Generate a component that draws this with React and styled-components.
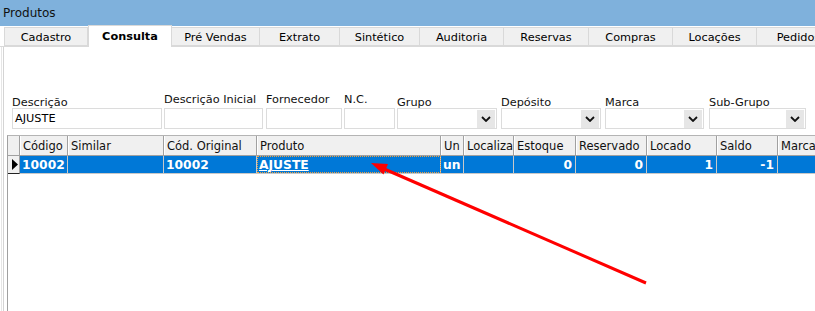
import React from 'react';
import styled, { createGlobalStyle } from 'styled-components';

const GlobalStyle = createGlobalStyle`
  html, body {
    margin: 0;
    padding: 0;
    background: #fff;
  }
  body {
    font-family: "DejaVu Sans", Verdana, sans-serif;
    font-size: 11px;
    color: #000;
  }
`;

const Window = styled.div`
  position: relative;
  width: 815px;
  height: 311px;
  overflow: hidden;
  display: flex;
  flex-direction: column;
  background: #fff;
`;

const TitleBar = styled.div`
  height: 26px;
  flex: none;
  background: #7fb1dc;
  font-size: 12px;
  line-height: 26px;
  padding-left: 3px;
  color: #111;
`;

const TabStrip = styled.div`
  height: 21px;
  flex: none;
  display: flex;
  align-items: flex-end;
  padding-left: 4px;
  border-bottom: 1px solid #d9d9d9;
  box-sizing: border-box;
`;

const Tab = styled.div`
  flex: none;
  width: ${(p) => p.$w}px;
  box-sizing: border-box;
  height: ${(p) => (p.$active ? 22 : 19)}px;
  margin-bottom: ${(p) => (p.$active ? -1 : 0)}px;
  background: ${(p) => (p.$active ? '#fff' : '#f0f0f0')};
  border: 1px solid #d9d9d9;
  border-bottom: ${(p) => (p.$active ? 'none' : '1px solid #d9d9d9')};
  border-left: ${(p) => (p.$first || p.$active ? '1px solid #d9d9d9' : 'none')};
  font-weight: ${(p) => (p.$active ? 'bold' : 'normal')};
  font-size: 11.3px;
  text-align: center;
  padding-top: ${(p) => (p.$active ? 1 : 2)}px;
  line-height: ${(p) => (p.$active ? 19 : 16)}px;
  white-space: nowrap;
  overflow: hidden;
  position: relative;
  z-index: ${(p) => (p.$active ? 1 : 0)};
`;

const Frame = styled.div`
  flex: 1;
  display: flex;
  border-left: 1px solid #e6e6e6;
  margin-left: 1px;
  min-height: 0;
`;

const Panel = styled.div`
  flex: 1;
  margin-left: 1px;
  border-left: 1px solid #d4d4d4;
  padding-left: 3px;
  display: flex;
  flex-direction: column;
  min-height: 0;
`;

const Filters = styled.div`
  display: flex;
  padding-top: 48px;
  padding-left: 5px;
  height: 82px;
  box-sizing: border-box;
  flex: none;
`;

const Field = styled.div`
  flex: none;
  width: ${(p) => p.$w}px;
  margin-right: ${(p) => p.$gap}px;
  display: flex;
  flex-direction: column;
`;

const Label = styled.div`
  height: 13px;
  line-height: 13px;
  font-size: 11.3px;
  white-space: nowrap;
  color: #111;
  transform: translateY(${(p) => (p.$raise ? -2 : 1)}px);
`;

const Input = styled.div`
  height: 21px;
  box-sizing: border-box;
  border: 1px solid #dcdcdc;
  background: #fff;
  display: flex;
  align-items: center;
  padding-left: 2px;
  font-size: 11.3px;
  position: relative;
`;

const DropButton = styled.div`
  margin-left: auto;
  width: 18px;
  height: 18px;
  margin-right: 1px;
  background: #e6e6e6;
  display: flex;
  align-items: center;
  justify-content: center;
`;

const Grid = styled.div`
  flex: 1;
  margin-top: 6px;
  border-left: 1px solid #a0a0a0;
  border-top: 1px solid #b4b4b4;
  background: #fff;
  min-height: 0;
`;

const Row = styled.div`
  display: grid;
  grid-template-columns: 12px 48px 96px 93px 184px 23px 50px 62px 71px 70px 61px 60px;
  height: ${(p) => p.$h}px;
  box-sizing: border-box;
  border-bottom: 1px solid ${(p) => (p.$head ? '#a0a0a0' : '#c8c8c8')};
`;

const HeadCell = styled.div`
  background: #f0f0f0;
  border-right: 1px solid #a0a0a0;
  box-shadow: inset 1px 0 0 #fff;
  padding-left: 3px;
  line-height: 20px;
  font-size: 11.5px;
  white-space: nowrap;
  overflow: hidden;
  color: #111;
`;

const Indicator = styled.div`
  background: #f0f0f0;
  border-right: 1px solid #a0a0a0;
  border-bottom: ${(p) => (p.$sel ? '1px solid #222' : 'none')};
  display: flex;
  align-items: center;
  padding-left: 4px;
  box-sizing: border-box;
  margin-bottom: ${(p) => (p.$sel ? -1 : 0)}px;
`;

const Cell = styled.div`
  background: #0078d7;
  color: #fff;
  font-weight: bold;
  font-size: 12.3px;
  line-height: 18px;
  border-right: 1px solid #c8c8c8;
  text-align: ${(p) => (p.$right ? 'right' : 'left')};
  padding: 0 3px 0 2px;
  white-space: nowrap;
  overflow: hidden;
  box-sizing: border-box;
  outline: ${(p) => (p.$focus ? '1px dotted #f0a040' : 'none')};
  outline-offset: -1px;
  text-decoration: ${(p) => (p.$focus ? 'underline' : 'none')};
`;

const Overlay = styled.svg`
  position: absolute;
  left: 0;
  top: 0;
  pointer-events: none;
`;

const Chevron = () => (
  <svg width="10" height="6" viewBox="0 0 10 6">
    <polyline points="1,1 5,5 9,1" fill="none" stroke="#111" strokeWidth="1.8" />
  </svg>
);

const tabs = [
  ['Cadastro', 84],
  ['Consulta', 84],
  ['Pré Vendas', 88],
  ['Extrato', 80],
  ['Sintético', 80],
  ['Auditoria', 84],
  ['Reservas', 85],
  ['Compras', 84],
  ['Locações', 84],
  ['Pedidos', 84],
];

const fields = [
  { label: 'Descrição', w: 150, gap: 2, value: 'AJUSTE' },
  { label: 'Descrição Inicial', w: 99, gap: 3, raise: true },
  { label: 'Fornecedor', w: 76, gap: 2, raise: true },
  { label: 'N.C.', w: 51, gap: 2, raise: true },
  { label: 'Grupo', w: 100, gap: 4, select: true },
  { label: 'Depósito', w: 100, gap: 4, select: true },
  { label: 'Marca', w: 99, gap: 5, select: true },
  { label: 'Sub-Grupo', w: 97, gap: 0, select: true },
];

const columns = ['Código', 'Similar', 'Cód. Original', 'Produto', 'Un', 'Localização', 'Estoque', 'Reservado', 'Locado', 'Saldo', 'Marca'];

const record = [
  { v: '10002' },
  { v: '' },
  { v: '10002' },
  { v: 'AJUSTE', focus: true },
  { v: 'un' },
  { v: '' },
  { v: '0', right: true },
  { v: '0', right: true },
  { v: '1', right: true },
  { v: '-1', right: true },
  { v: '' },
];

export default function App() {
  return (
    <>
      <GlobalStyle />
      <Window>
        <TitleBar>Produtos</TitleBar>
        <TabStrip>
          {tabs.map(([name, w], i) => (
            <Tab key={name} $w={w} $first={i === 0} $active={i === 1}>
              {name}
            </Tab>
          ))}
        </TabStrip>
        <Frame>
          <Panel>
            <Filters>
              {fields.map((f) => (
                <Field key={f.label} $w={f.w} $gap={f.gap}>
                  <Label $raise={f.raise}>{f.label}</Label>
                  <Input>
                    {f.value}
                    {f.select && (
                      <DropButton>
                        <Chevron />
                      </DropButton>
                    )}
                  </Input>
                </Field>
              ))}
            </Filters>
            <Grid>
              <Row $head $h={20}>
                <Indicator />
                {columns.map((c) => (
                  <HeadCell key={c}>{c}</HeadCell>
                ))}
              </Row>
              <Row $h={18}>
                <Indicator $sel>
                  <svg width="6" height="11" viewBox="0 0 6 11">
                    <polygon points="0,0 6,5.5 0,11" fill="#000" />
                  </svg>
                </Indicator>
                {record.map((c, i) => (
                  <Cell key={i} $right={c.right} $focus={c.focus}>
                    {c.v}
                  </Cell>
                ))}
              </Row>
            </Grid>
          </Panel>
        </Frame>
        <Overlay width="815" height="311" viewBox="0 0 815 311">
          <line x1="646" y1="283" x2="382" y2="168" stroke="#f00" strokeWidth="3" />
          <polygon points="371,163 383.5,174.5 388,164" fill="#f00" />
        </Overlay>
      </Window>
    </>
  );
}
